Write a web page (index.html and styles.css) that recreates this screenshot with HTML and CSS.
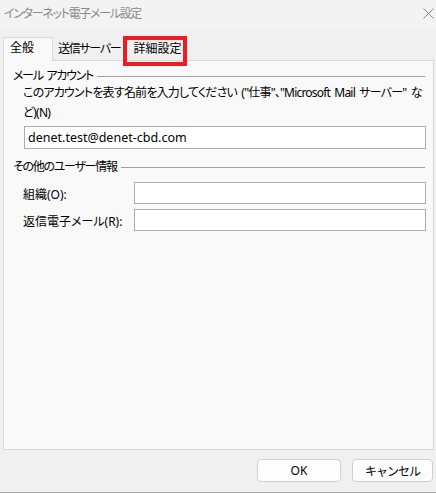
FILE: index.html
```html
<!DOCTYPE html>
<html lang="ja">
<head>
<meta charset="utf-8">
<title>インターネット電子メール設定</title>
<link rel="stylesheet" href="styles.css">
</head>
<body>
<div class="window">
  <div class="titlebar">
    <span class="title kana">インターネット電子メール設定</span>
    <svg class="close" width="11" height="11" viewBox="0 0 11 11" aria-hidden="true">
      <path d="M0.5 0.5 L10.5 10.5 M10.5 0.5 L0.5 10.5" stroke="#8c8c8c" stroke-width="1" fill="none"/>
    </svg>
  </div>

  <div class="tabs">
    <div class="tab tab-active">全般</div>
    <div class="tab kana">送信サーバー</div>
    <div class="tab tab-marked">詳細設定</div>
  </div>

  <div class="panel">
    <div class="group-head">
      <span class="group-title kana">メール アカウント</span>
      <span class="group-rule"></span>
    </div>
    <p class="field-label">このアカウントを表す名前を入力してください ("仕事"、"Microsoft Mail サーバー" など)(N)</p>
    <input class="textbox textbox-wide" type="text" value="denet.test@denet-cbd.com">

    <div class="group-head group-head-second">
      <span class="group-title kana">その他のユーザー情報</span>
      <span class="group-rule"></span>
    </div>
    <div class="form-grid">
      <label class="row-label">組織(O):</label>
      <input class="textbox" type="text">
      <label class="row-label">返信電子メール(R):</label>
      <input class="textbox" type="text">
    </div>
  </div>

  <div class="footer">
    <button class="btn" type="button">OK</button>
    <button class="btn kana" type="button">キャンセル</button>
  </div>
</div>
</body>
</html>
```

FILE: styles.css
```css
* {
  box-sizing: border-box;
}

html, body {
  margin: 0;
  padding: 0;
  background: #f0f0f0;
}

body {
  font-family: "Noto Sans", "Noto Sans CJK JP", sans-serif;
  font-size: 12px;
  font-feature-settings: "palt";
  color: #000;
}

/* kana-heavy captions are set tighter, as the system UI face draws them */
.kana {
  letter-spacing: -1.3px;
  word-spacing: 2px;
}

.window {
  width: 436px;
  height: 493px;
  display: flex;
  flex-direction: column;
  background: #f0f0f0;
  border-bottom: 1px solid #a8a8a8;
}

/* title bar */
.titlebar {
  height: 28px;
  flex: none;
  display: flex;
  align-items: center;
  justify-content: space-between;
  padding: 0 2px 0 4px;
  background: #f3f3f3;
}

.title {
  color: #8a8a8a;
  font-size: 12px;
  line-height: 16px;
}

.close {
  display: block;
  margin-top: -1px;
}

/* tab strip */
.tabs {
  flex: none;
  display: flex;
  align-items: flex-end;
  height: 23px;
  margin-top: 9px;
  padding-left: 3px;
}

.tab {
  height: 21px;
  padding: 0 7px 0 5px;
  line-height: 19px;
  white-space: nowrap;
}

.tab-active {
  position: relative;
  z-index: 1;
  width: 50px;
  height: 24px;
  margin-bottom: -1px;
  padding: 0 6px;
  line-height: 20px;
  background: #f9f9f9;
  border: 1px solid #d9d9d9;
  border-bottom: none;
}

.tab-marked {
  position: relative;
  z-index: 2;
  height: 22px;
  margin-bottom: -2px;
  padding: 0 2px 0 6px;
  line-height: 17px;
  outline: 4px solid #ed1c24;
  outline-offset: 0;
}

/* page body */
.panel {
  flex: none;
  height: 390px;
  margin: 0 2px 0 3px;
  padding: 8px 8px 0 9px;
  background: #f9f9f9;
  border: 1px solid #d9d9d9;
}

.group-head {
  display: flex;
  align-items: center;
  gap: 4px;
  height: 14px;
}

.group-head-second {
  margin-top: 11px;
}

.group-title {
  line-height: 14px;
  white-space: nowrap;
}

.group-rule {
  flex: 1;
  height: 1px;
  background: #a0a0a0;
}

.field-label {
  width: 405px;
  margin: 0 0 0 10px;
  line-height: 20px;
  letter-spacing: -0.8px;
  word-spacing: 2px;
}

.textbox {
  display: block;
  height: 22px;
  padding: 0 3px;
  border: 1px solid #adadad;
  border-radius: 0;
  background: #fff;
  font: inherit;
  color: #000;
  outline: none;
}

.textbox-wide {
  width: 402px;
  height: 23px;
  margin: 3px 0 0 11px;
  font-size: 12.5px;
}

.form-grid {
  display: grid;
  grid-template-columns: 111px 292px;
  row-gap: 5px;
  margin: 8px 0 0 10px;
  align-items: center;
}

.row-label {
  padding-top: 1px;
}

/* dialog buttons */
.footer {
  flex: 1;
  display: flex;
  justify-content: flex-end;
  gap: 11px;
  padding: 9px 3px 0 0;
}

.btn {
  width: 84px;
  height: 23px;
  padding: 0;
  background: #fdfdfd;
  border: 1px solid #d0d0d0;
  border-radius: 4px;
  font-family: inherit;
  font-size: 12px;
  color: #000;
}

.btn.kana {
  width: 81px;
  letter-spacing: -1px;
  word-spacing: 0;
}
```
